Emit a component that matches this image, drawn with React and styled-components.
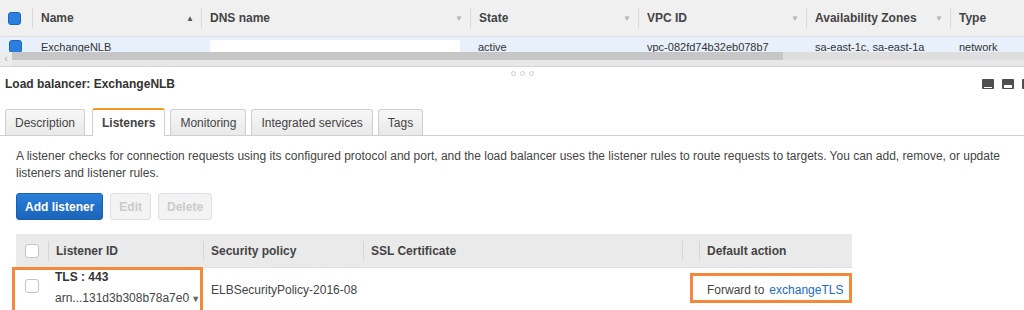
import styled, { createGlobalStyle } from "styled-components";

const GlobalStyle = createGlobalStyle`
  body {
    margin: 0;
    background: #fff;
    font-family: "Liberation Sans", Arial, sans-serif;
    overflow: hidden;
  }
`;

const Page = styled.div`
  width: 1024px;
  height: 310px;
  overflow: hidden;
  color: #444;
  font-size: 12px;
`;

const gridCols = "32px 169px 269px 168px 168px 144px 74px";

const GridHead = styled.div`
  display: grid;
  grid-template-columns: ${gridCols};
  height: 37px;
  background: #f0f0f0;
  border-bottom: 1px solid #dedede;
  box-sizing: border-box;
`;

const HeadCell = styled.div`
  display: flex;
  align-items: center;
  padding-left: ${(p) => (p.first ? "8px" : "0")};
`;

const HeadInner = styled.div`
  flex: 1;
  display: flex;
  align-items: center;
  justify-content: space-between;
  height: 20px;
  border-left: 1px solid #d9d9d9;
  padding: 0 7px 0 8px;
  font-weight: bold;
  color: #444;
`;

const SortArrow = styled.span`
  font-size: 8px;
  color: ${(p) => (p.active ? "#555" : "#b5b5b5")};
`;

const BlueCheck = styled.span`
  display: block;
  width: 13px;
  height: 13px;
  box-sizing: border-box;
  border-radius: 3px;
  background: #2d7fdf;
  border: 1px solid #1e63b9;
`;

const GridRow = styled.div`
  display: grid;
  grid-template-columns: ${gridCols};
  height: 15px;
  overflow: hidden;
  background: #e8f0fb;
`;

const RowCell = styled.div`
  padding: ${(p) => (p.check ? "3px" : "4px")} 0 0 ${(p) => p.pad || "9px"};
  white-space: nowrap;
  color: #333;
  font-size: 11px;
  line-height: 13px;
`;

const Redacted = styled.div`
  width: 250px;
  height: 12px;
  background: #fff;
  margin-top: -1px;
`;

const Scrollbar = styled.div`
  display: flex;
  height: 14px;
  border-bottom: 1px solid #d4d4d4;
`;

const ScrollArrow = styled.div`
  width: 12px;
  background: #ececec;
  color: #aaa;
  font-size: 11px;
  line-height: 12px;
  text-align: center;
`;

const Track = styled.div`
  flex: 1;
  display: flex;
  flex-direction: column;
`;

const TrackTop = styled.div`
  display: flex;
  height: 8px;
  background: #dedede;
`;

const Thumb = styled.div`
  width: 771px;
  background: #c6c6c6;
`;

const TrackBottom = styled.div`
  flex: 1;
  background: #e7e7e7;
`;

const Splitter = styled.div`
  display: flex;
  justify-content: center;
  gap: 4px;
  padding-top: 4px;
  height: 6px;
  padding-left: 20px;
`;

const Dot = styled.span`
  width: 3px;
  height: 3px;
  border-radius: 50%;
  border: 1px solid #d0d0d0;
`;

const TitleBar = styled.div`
  display: flex;
  align-items: center;
  justify-content: space-between;
  height: 14px;
  padding: 0 0 0 5px;
`;

const PanelTitle = styled.div`
  font-weight: bold;
  color: #333;
  font-size: 12px;
`;

const Icons = styled.div`
  display: flex;
  gap: 8px;
  margin-right: -10px;
`;

const TabBar = styled.div`
  display: flex;
  align-items: flex-end;
  gap: 5px;
  margin-top: 17px;
  padding-left: 5px;
  height: 27px;
  border-bottom: 1px solid #cfcfcf;
`;

const Tab = styled.div`
  height: 26px;
  display: flex;
  align-items: center;
  padding: 0 9px;
  box-sizing: border-box;
  border: 1px solid #cfcfcf;
  border-bottom: none;
  border-radius: 3px 3px 0 0;
  color: #444;
  background: ${(p) =>
    p.active ? "#fff" : "linear-gradient(#f7f7f7, #e9e9e9)"};
  font-weight: ${(p) => (p.active ? "bold" : "normal")};
  ${(p) =>
    p.active &&
    `
    height: 28px;
    margin-bottom: -1px;
    border-top: 2px solid #f7981d;
    margin-left: 2px;
  `}
`;

const Content = styled.div`
  padding: 0 16px;
`;

const Intro = styled.p`
  margin: 12px 0 0;
  line-height: 17px;
  color: #444;
`;

const Actions = styled.div`
  display: flex;
  gap: 7px;
  margin-top: 11px;
`;

const Button = styled.button`
  height: 27px;
  padding: 0 8px;
  border-radius: 3px;
  font-family: inherit;
  font-size: 12px;
  font-weight: bold;
  border: 1px solid ${(p) => (p.primary ? "#1a5fb0" : "#e0e0e0")};
  background: ${(p) =>
    p.primary ? "linear-gradient(#2a7fd9, #1b64b9)" : "#f3f3f3"};
  color: ${(p) => (p.primary ? "#fff" : "#cbcbcb")};
`;

const TableWrap = styled.div`
  position: relative;
  width: 836px;
  margin-top: 14px;
`;

const tableCols = "32px 155px 160px 319px 17px 153px";

const TableHead = styled.div`
  display: grid;
  grid-template-columns: ${tableCols};
  height: 34px;
  background: #eaeaea;
  border-bottom: 1px solid #e0e0e0;
  box-sizing: border-box;
`;

const TH = styled.div`
  display: flex;
  align-items: center;
  padding-left: ${(p) => (p.first ? "9px" : "0")};
`;

const THInner = styled.div`
  flex: 1;
  display: flex;
  align-items: center;
  height: 20px;
  border-left: 1px solid #d6d6d6;
  padding-left: 7px;
  font-weight: bold;
  color: #444;
`;

const Check = styled.span`
  display: block;
  width: 14px;
  height: 14px;
  box-sizing: border-box;
  border: 1px solid #c4c4c4;
  border-radius: 3px;
  background: #fff;
`;

const TableRow = styled.div`
  display: grid;
  grid-template-columns: ${tableCols};
  height: 50px;
  background: #fff;
`;

const TD = styled.div`
  display: flex;
  flex-direction: column;
  justify-content: ${(p) => (p.top ? "flex-start" : "center")};
  padding: ${(p) => (p.top ? "1px 0 0 7px" : "0 0 6px 8px")};
  white-space: nowrap;
  color: #444;
`;

const CheckCell = styled.div`
  padding: 11px 0 0 9px;
`;

const Protocol = styled.div`
  font-weight: bold;
  color: #333;
  line-height: 16px;
`;

const Arn = styled.div`
  margin-top: 5px;
  line-height: 16px;
  color: #444;
`;

const Caret = styled.span`
  font-size: 9px;
  color: #666;
  margin-left: 2px;
`;

const Link = styled.a`
  color: #1b6ac9;
  margin-left: 5px;
  text-decoration: none;
`;

const Highlight = styled.div`
  position: absolute;
  box-sizing: border-box;
  border: 3px solid #f5883a;
  pointer-events: none;
`;

const PanelIcon = ({ fill }) => (
  <svg width="12" height="10" viewBox="0 0 12 10">
    <rect x="0" y="0" width="12" height="10" rx="1" fill="#4f4f4f" />
    <rect x="2" y={10 - fill - 1} width="8" height={fill} fill="#fff" />
  </svg>
);

const headCols = [
  { label: "Name", arrow: "▲", active: true },
  { label: "DNS name", arrow: "▼" },
  { label: "State", arrow: "▼" },
  { label: "VPC ID", arrow: "▼" },
  { label: "Availability Zones", arrow: "▼" },
  { label: "Type" },
];

const tabs = ["Description", "Listeners", "Monitoring", "Integrated services", "Tags"];

export default function App() {
  return (
    <Page>
      <GlobalStyle />
      <GridHead>
        <HeadCell first>
          <BlueCheck />
        </HeadCell>
        {headCols.map((c) => (
          <HeadCell key={c.label}>
            <HeadInner>
              <span>{c.label}</span>
              {c.arrow && <SortArrow active={c.active}>{c.arrow}</SortArrow>}
            </HeadInner>
          </HeadCell>
        ))}
      </GridHead>
      <GridRow>
        <RowCell check>
          <BlueCheck />
        </RowCell>
        <RowCell>ExchangeNLB</RowCell>
        <RowCell>
          <Redacted />
        </RowCell>
        <RowCell pad="8px">active</RowCell>
        <RowCell>vpc-082fd74b32eb078b7</RowCell>
        <RowCell>sa-east-1c, sa-east-1a</RowCell>
        <RowCell>network</RowCell>
      </GridRow>
      <Scrollbar>
        <ScrollArrow>‹</ScrollArrow>
        <Track>
          <TrackTop>
            <Thumb />
          </TrackTop>
          <TrackBottom />
        </Track>
      </Scrollbar>
      <Splitter>
        <Dot />
        <Dot />
        <Dot />
      </Splitter>
      <TitleBar>
        <PanelTitle>Load balancer: ExchangeNLB</PanelTitle>
        <Icons>
          <PanelIcon fill={1} />
          <PanelIcon fill={3} />
          <PanelIcon fill={6} />
        </Icons>
      </TitleBar>
      <TabBar>
        {tabs.map((t) => (
          <Tab key={t} active={t === "Listeners"}>
            {t}
          </Tab>
        ))}
      </TabBar>
      <Content>
        <Intro>
          A listener checks for connection requests using its configured protocol and port, and the load
          balancer uses the listener rules to route requests to targets. You can add, remove, or update
          listeners and listener rules.
        </Intro>
        <Actions>
          <Button primary>Add listener</Button>
          <Button disabled>Edit</Button>
          <Button disabled>Delete</Button>
        </Actions>
        <TableWrap>
          <TableHead>
            <TH first>
              <Check />
            </TH>
            <TH>
              <THInner>Listener ID</THInner>
            </TH>
            <TH>
              <THInner>Security policy</THInner>
            </TH>
            <TH>
              <THInner>SSL Certificate</THInner>
            </TH>
            <TH>
              <THInner />
            </TH>
            <TH>
              <THInner>Default action</THInner>
            </TH>
          </TableHead>
          <TableRow>
            <CheckCell>
              <Check />
            </CheckCell>
            <TD top>
              <Protocol>TLS : 443</Protocol>
              <Arn>
                arn...131d3b308b78a7e0<Caret>▼</Caret>
              </Arn>
            </TD>
            <TD>ELBSecurityPolicy-2016-08</TD>
            <TD />
            <TD />
            <TD>
              <div>
                Forward to<Link>exchangeTLS</Link>
              </div>
            </TD>
          </TableRow>
          <Highlight style={{ left: -4, top: 33, width: 191, height: 50 }} />
          <Highlight style={{ left: 674, top: 39, width: 162, height: 30 }} />
        </TableWrap>
      </Content>
    </Page>
  );
}
